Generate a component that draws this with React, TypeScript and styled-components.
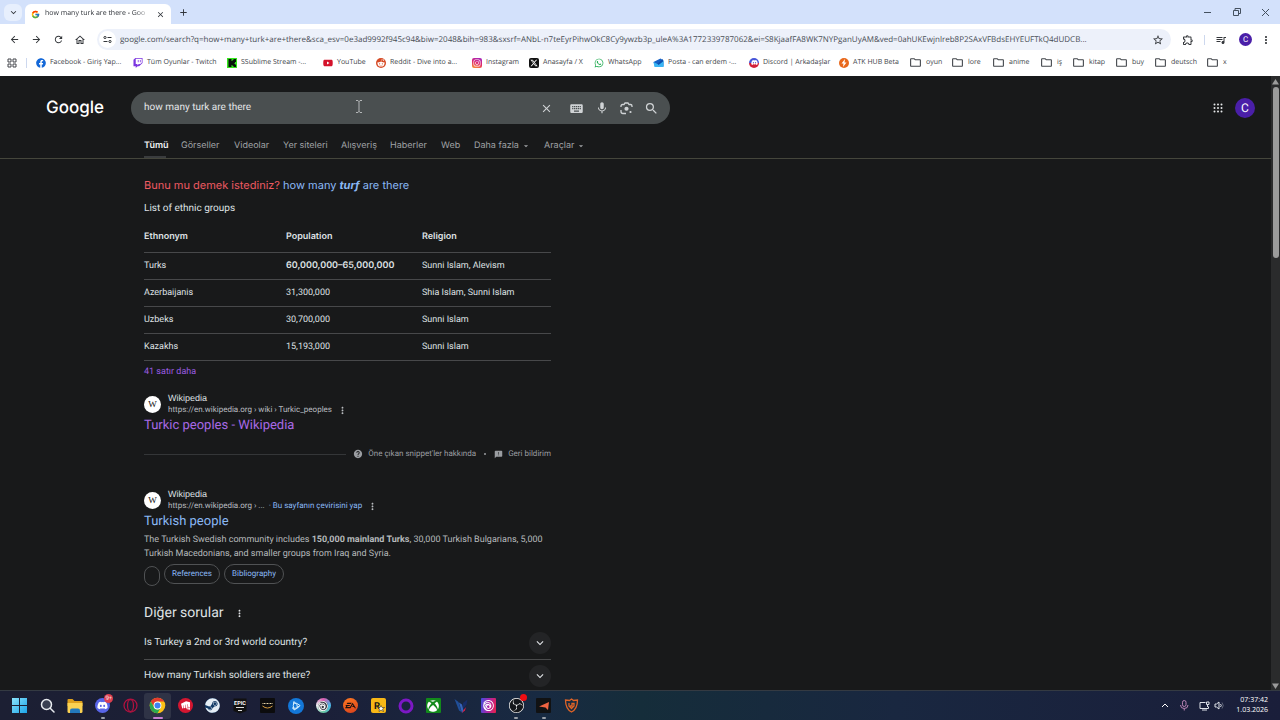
import React from 'react';
import styled, { createGlobalStyle, css } from 'styled-components';
import { FcGoogle } from 'react-icons/fc';
import {
  FaDiscord, FaFacebook, FaInstagram, FaRedditAlien, FaSteam, FaTwitch, FaWhatsapp, FaXbox, FaYoutube,
} from 'react-icons/fa';
import { FaXTwitter } from 'react-icons/fa6';
import { SiEa, SiUbisoft, SiRiotgames, SiObsstudio } from 'react-icons/si';
import {
  MdAdd, MdArrowBack, MdArrowDropDown, MdArrowForward, MdClose, MdExpandMore, MdFeedback, MdHelp,
  MdKeyboard, MdMic, MdMoreVert, MdOutlineExtension, MdOutlineFolder, MdOutlineHome, MdQueueMusic, MdRefresh,
  MdSearch, MdStarBorder,
} from 'react-icons/md';

const ui = '"Open Sans", "Noto Sans", sans-serif';
const google = 'Roboto, "Liberation Sans", sans-serif';
const strong = 'Inter, Roboto, sans-serif';
const arial = '"Liberation Sans", Arial, sans-serif';

const GlobalStyle = createGlobalStyle`
  *, *::before, *::after { box-sizing: border-box; }
  body { margin: 0; background: #18191a; text-rendering: geometricPrecision; }
  button { border: 0; padding: 0; background: none; color: inherit; font: inherit; cursor: pointer; }
  input, button { text-rendering: inherit; }
  a { color: inherit; text-decoration: none; }
  svg { display: block; flex: none; }
  h1, h2, h3, p { margin: 0; font-weight: 400; }
`;

const Screen = styled.div`
  display: flex;
  flex-direction: column;
  height: 100vh;
  overflow: hidden;
  font-family: ${google};
`;

/* Browser chrome */
const TabStrip = styled.div`
  display: flex;
  align-items: flex-end;
  height: 24px;
  flex: none;
  padding-left: 4px;
  background: #d3e1fb;
  color: #30343a;
  font-family: ${ui};
`;
const TabSearch = styled.button`
  display: grid;
  place-items: center;
  width: 18px;
  height: 17px;
  margin: 0 3px 3px 0;
  border-radius: 6px;
  background: #e7effd;
`;
const Tab = styled.div`
  display: flex;
  align-items: center;
  gap: 5px;
  width: 146px;
  height: 20px;
  padding: 0 6px;
  border-radius: 6px 6px 0 0;
  background: #fff;
`;
const TabTitle = styled.span`
  flex: 1;
  overflow: hidden;
  white-space: nowrap;
  font-size: 7px;
  line-height: 12px;
  mask-image: linear-gradient(90deg, #000 85%, transparent);
`;
const NewTab = styled.button`
  display: grid;
  place-items: center;
  width: 24px;
  height: 24px;
`;
const WindowButtons = styled.div`
  display: flex;
  margin-left: auto;
`;
const WindowButton = styled.button`
  display: grid;
  place-items: center;
  width: 29px;
  height: 24px;
`;
const Toolbar = styled.div`
  display: flex;
  align-items: center;
  height: 30px;
  flex: none;
  padding: 1px 0 0 3px;
  background: #fff;
  color: #34373b;
`;
const ToolButton = styled.button<{ $w?: number }>`
  display: grid;
  place-items: center;
  width: ${(p) => p.$w ?? 22}px;
  height: 22px;
  flex: none;
`;
const Omnibox = styled.div`
  display: flex;
  align-items: center;
  flex: 1;
  min-width: 0;
  height: 21px;
  margin: 0 6px;
  padding-left: 2px;
  border-radius: 11px;
  background: #edf1fa;
`;
const SiteInfo = styled.button`
  display: grid;
  place-items: center;
  width: 17px;
  height: 17px;
  flex: none;
  border-radius: 50%;
  background: #fff;
`;
const UrlInput = styled.input`
  flex: 1;
  min-width: 0;
  margin-left: 4px;
  border: 0;
  padding: 0;
  background: none;
  color: #484d55;
  font: 8px/16px ${ui};
  text-overflow: ellipsis;
  outline: 0;
`;
const Divider = styled.span<{ $gap?: number }>`
  width: 1px;
  height: 10px;
  flex: none;
  margin: 0 ${(p) => p.$gap ?? 5}px;
  background: #cdd8ee;
`;
const Avatar = styled.button<{ $size: number }>`
  display: grid;
  place-items: center;
  width: ${(p) => p.$size}px;
  height: ${(p) => p.$size}px;
  flex: none;
  border-radius: 50%;
  background: #4a1fa8;
  color: #fff;
  font: ${(p) => (p.$size > 15 ? 12 : 8)}px/12px ${google};
`;
const Profile = styled.div`
  margin-left: 7px;
`;
const Bookmarks = styled.nav`
  display: flex;
  align-items: center;
  height: 22px;
  flex: none;
  padding: 0 0 5px 7px;
  background: #fff;
  color: #404449;
  font: 7px/12px ${ui};
  white-space: nowrap;
`;
const Bookmark = styled.a<{ $w: number }>`
  display: flex;
  align-items: center;
  gap: 4px;
  width: ${(p) => p.$w}px;
  flex: none;
`;
const Square = styled.span<{ $bg: string; $round?: boolean }>`
  display: grid;
  place-items: center;
  width: 10px;
  height: 10px;
  flex: none;
  border-radius: ${(p) => (p.$round ? '50%' : '2px')};
  background: ${(p) => p.$bg};
  color: #fff;
`;

/* Search page */
const Viewport = styled.div`
  display: flex;
  flex: 1;
  min-height: 0;
  background: #18191a;
  color: #dfe1e4;
`;
const Page = styled.main`
  flex: 1;
  min-width: 0;
  overflow: hidden;
`;
const Header = styled.header`
  border-bottom: 1px solid #45463c;
`;
const SearchRow = styled.div`
  display: flex;
  align-items: center;
  padding: 16px 16px 0 46px;
`;
const Logo = styled.a`
  width: 85px;
  color: #fff;
  font: 500 17px/24px Inter, sans-serif;
`;
const SearchBox = styled.form`
  position: relative;
  display: flex;
  align-items: center;
  width: 539px;
  height: 32px;
  padding: 0 6px 0 13px;
  border-radius: 16px;
  background: #4a4f50;
  color: #d0d3d5;
`;
const SearchInput = styled.input`
  flex: 1;
  min-width: 0;
  border: 0;
  padding: 0;
  background: none;
  color: #e4e6e8;
  font: 10px/20px ${google};
  outline: 0;
`;
const SearchButton = styled.button<{ $w?: number }>`
  display: grid;
  place-items: center;
  width: ${(p) => p.$w ?? 25}px;
  height: 24px;
`;
const Pointer = styled.svg`
  position: absolute;
  left: 224px;
  top: 8px;
`;
const Account = styled.div`
  display: flex;
  align-items: center;
  gap: 12px;
  margin-left: auto;
`;
const Filters = styled.nav`
  display: flex;
  gap: 15px;
  padding: 9px 0 0 144px;
  color: #a0a3a6;
  font: 9px/25px ${strong};
  white-space: nowrap;
`;
const Filter = styled.a<{ $active?: boolean; $w: number }>`
  display: flex;
  align-items: center;
  gap: 2px;
  width: ${(p) => p.$w}px;
  ${(p) => p.$active && css`
    color: #f1f2f3;
    font-weight: 600;
    box-shadow: inset 0 -2px #3a3c3e;
  `}
`;
const Results = styled.div`
  width: 407px;
  margin-left: 144px;
  padding-top: 14px;
`;
const DidYouMean = styled.p`
  color: #ee5a62;
  font: 11px/24px ${strong};
  a { color: #8ab8f5; }
  em { font-weight: 700; }
`;
const ListTitle = styled.h2`
  font-size: 10px;
  line-height: 24px;
`;
const Table = styled.table`
  width: 100%;
  border-spacing: 0;
  table-layout: fixed;
  font-size: 9px;
  line-height: 16px;
  th, td {
    height: 27px;
    padding: 0;
    border-bottom: 1px solid #47484a;
    text-align: left;
    font-weight: 400;
  }
  thead th, b { font-family: ${strong}; font-weight: 600; }
  thead th { height: 32px; }
  thead th:nth-child(1) { width: 142px; }
  thead th:nth-child(2) { width: 136px; }
`;
const MoreRows = styled.a`
  display: block;
  color: #9a5be0;
  font-size: 9px;
  line-height: 23px;
`;
const Source = styled.div`
  display: flex;
  align-items: center;
  gap: 7px;
  height: 24px;
  margin-top: 8px;
`;
const Favicon = styled.span`
  display: grid;
  place-items: center;
  width: 17px;
  height: 17px;
  border-radius: 50%;
  background: #fff;
  color: #222;
  font: 9px/12px "Liberation Serif", serif;
`;
const SiteName = styled.div`
  font: 9px/12px ${arial};
`;
const SitePath = styled.div`
  display: flex;
  align-items: center;
  color: #b9bcc0;
  font-size: 8px;
  line-height: 12px;
  white-space: pre;
  a { color: #8ab8f5; }
  button { margin-left: 5px; }
`;
const ResultTitle = styled.h3<{ $visited?: boolean }>`
  color: ${(p) => (p.$visited ? '#a869e6' : '#8ab8f5')};
  font-size: 13px;
  line-height: 20px;
`;
const SnippetFooter = styled.div`
  display: flex;
  align-items: center;
  margin: 9px 0 25px;
  color: #9a9da1;
  font-size: 8px;
  line-height: 18px;
`;
const Rule = styled.span`
  flex: 1;
  height: 1px;
  margin-right: 7px;
  background: #343638;
`;
const FooterLink = styled.a`
  display: flex;
  align-items: center;
  gap: 5px;
`;
const Dot = styled.span`
  width: 2px;
  height: 2px;
  margin: 0 8px;
  border-radius: 50%;
  background: #9a9da1;
`;
const Description = styled.p`
  padding-top: 1px;
  color: #b6b9bc;
  font-size: 9px;
  line-height: 14px;
`;
const Chips = styled.div`
  display: flex;
  align-items: flex-start;
  gap: 4px;
  padding-top: 3px;
`;
const Chip = styled.a<{ $empty?: boolean }>`
  display: block;
  min-width: 16px;
  height: 20px;
  margin-top: ${(p) => (p.$empty ? 2 : 0)}px;
  padding: 0 7px;
  border: 1px solid #505254;
  border-radius: 10px;
  color: #8ab8f5;
  font-size: 8px;
  line-height: 18px;
`;
const QuestionsHead = styled.div`
  display: flex;
  align-items: center;
  gap: 10px;
  margin: 17px 0 4px;
`;
const QuestionsTitle = styled.h2`
  font-size: 14px;
  line-height: 20px;
`;
const Question = styled.button`
  display: flex;
  align-items: center;
  justify-content: space-between;
  width: 100%;
  height: 33px;
  border-bottom: 1px solid #4a4b4c;
  font-size: 10px;
  line-height: 20px;
`;
const Round = styled.span`
  display: grid;
  place-items: center;
  width: 22px;
  height: 22px;
  border-radius: 50%;
  background: #232426;
`;
const Scrollbar = styled.div`
  display: flex;
  flex-direction: column;
  align-items: center;
  justify-content: space-between;
  width: 9px;
  padding: 3px 0 1px;
  background: #2a2b2c;
`;
const Thumb = styled.div`
  width: 6px;
  height: 171px;
  margin: 2px 0 auto;
  border-radius: 3px;
  background: #9b9b9b;
`;

/* Taskbar */
const Taskbar = styled.footer`
  display: flex;
  align-items: center;
  justify-content: space-between;
  height: 30px;
  flex: none;
  padding: 0 12px 0 6px;
  border-top: 1px solid #343a42;
  background: linear-gradient(90deg, #1c1f33 0%, #1b1f38 25%, #182a42 42%, #152d3a 50%, #192740 70%, #1a1e3a 100%);
  color: #fff;
  font-family: ${ui};
`;
const Apps = styled.div`
  display: flex;
  width: 579px;
`;
const AppButton = styled.button<{ $running?: string; $active?: boolean }>`
  position: relative;
  display: grid;
  place-items: center;
  flex: 1;
  height: 26px;
  border-radius: 3px;
  background: ${(p) => (p.$active ? '#2f3346' : 'none')};
  ${(p) => p.$running && css`
    &::after {
      content: '';
      position: absolute;
      bottom: 0;
      width: ${p.$active ? 10 : 4}px;
      height: 2px;
      border-radius: 1px;
      background: ${p.$running};
    }
  `}
`;
const Badge = styled.span`
  position: absolute;
  top: 1px;
  right: 3px;
  width: 9px;
  height: 9px;
  border-radius: 50%;
  background: #dc3f50;
  color: #fff;
  font-size: 6px;
  line-height: 9px;
`;
const RecDot = styled(Badge)`
  width: 7px;
  height: 7px;
  background: #f00d12;
`;
const Tile = styled.span<{ $bg: string; $round?: boolean; $color?: string }>`
  display: grid;
  place-items: center;
  width: 15px;
  height: 15px;
  border-radius: ${(p) => (p.$round ? '50%' : '1px')};
  background: ${(p) => p.$bg};
  color: ${(p) => p.$color ?? '#fff'};
`;
const Tray = styled.div`
  display: flex;
  align-items: center;
  gap: 7px;
`;
const Status = styled.div`
  display: flex;
  align-items: center;
  gap: 4px;
`;
const Clock = styled.time`
  width: 37px;
  font-size: 7px;
  line-height: 10px;
  text-align: right;
  white-space: nowrap;
`;

const Kick = () => (
  <svg width="10" height="10" viewBox="0 0 20 20">
    <path fill="#35e51c" d="M0 0h20v20H0z" />
    <path fill="#07130a" d="M3 2h6v4h2V4h2V2h5v6h-2v2h-2v1h2v2h2v5h-5v-2h-2v-2H9v4H3z" />
  </svg>
);
const Mail = () => (
  <svg width="11" height="10" viewBox="0 0 22 20">
    <path fill="#1560c5" d="M1 8 15 1l6 4v12H4z" />
    <path fill="#39b5f4" d="M1 8l10 5L21 5v13H3z" />
    <path fill="#0d4fae" d="M9 11 20 2v5l-9 7z" />
  </svg>
);
const SiteControls = () => (
  <svg width="9" height="9" viewBox="0 0 18 18" fill="none" stroke="#34373b" strokeWidth="2">
    <circle cx="4" cy="5" r="2.2" /><path d="M9 5h8M1 13h8" /><circle cx="14" cy="13" r="2.2" />
  </svg>
);
const TabGroups = () => (
  <svg width="10" height="10" viewBox="0 0 20 20" fill="none" stroke="#44474c" strokeWidth="2">
    <path d="M2 2h6v6H2zM12 2h6v6h-6zM2 12h6v6H2zM12 12h6v6h-6z" />
  </svg>
);
const Lens = () => (
  <svg width="13" height="13" viewBox="0 0 26 26" fill="none" stroke="currentColor" strokeWidth="2.6">
    <path d="M2 10V8q0-3 3-3h3l2-3h6l2 3h3q3 0 3 3v2M2 16v3q0 4 4 4h6" />
    <circle cx="13" cy="13.5" r="4.2" fill="currentColor" stroke="none" />
    <circle cx="21" cy="20" r="2.2" fill="currentColor" stroke="none" />
  </svg>
);
const AppsGrid = () => (
  <svg width="10" height="10" viewBox="0 0 20 20" fill="#e6e8ea">
    {[3, 10, 17].map((y) => [3, 10, 17].map((x) => <circle key={`${x}-${y}`} cx={x} cy={y} r="2" />))}
  </svg>
);
const Chrome = () => (
  <svg width="17" height="17" viewBox="0 0 48 48">
    <circle cx="24" cy="24" r="22" fill="#fbc116" />
    <path fill="#e33b2e" d="M5 13a22 22 0 0 1 38 0H24a11 11 0 0 0-9.500 16.500z" />
    <path fill="#2da94f" d="M5 13a22 22 0 0 0 19 33l9.500-16.500A11 11 0 0 1 14.500 29.500z" />
    <circle cx="24" cy="24" r="11" fill="#fff" /><circle cx="24" cy="24" r="8.500" fill="#3e82f1" />
  </svg>
);
const StartLogo = () => (
  <svg width="15" height="15" viewBox="0 0 30 30">
    <defs>
      <linearGradient id="start" x1="0" y1="0" x2="1" y2="1">
        <stop stopColor="#8be3fb" /><stop offset="1" stopColor="#1ba4e8" />
      </linearGradient>
    </defs>
    <path fill="url(#start)" d="M0 0h14v14H0zM16 0h14v14H16zM0 16h14v14H0zM16 16h14v14H16z" />
  </svg>
);
const TaskSearch = () => (
  <svg width="15" height="15" viewBox="0 0 30 30" fill="#3a4052" stroke="#e8ebef" strokeWidth="3">
    <circle cx="13" cy="13" r="10" /><path strokeLinecap="round" d="m21 21 7 7" />
  </svg>
);
const Explorer = () => (
  <svg width="16" height="14" viewBox="0 0 32 28">
    <path fill="#dfa11d" d="M1 2q0-2 2-2h8l4 4h14q2 0 2 2v8H1z" />
    <path fill="#fbd252" d="M1 8h30v17q0 3-3 3H4q-3 0-3-3z" />
    <path fill="#2379bd" d="M6 28v-5q0-4 4-4h12q4 0 4 4v5z" />
  </svg>
);
const BattleNet = () => (
  <svg width="16" height="16" viewBox="0 0 32 32">
    <circle cx="16" cy="16" r="16" fill="#1377d8" />
    <g fill="none" stroke="#d9f2ff" strokeWidth="2">
      <path d="M12 7q-3 8 0 17 9-4 12-9-6-6-14-5" /><path d="M8 20q8 3 15-4M12 7q8 6 7 13" />
    </g>
  </svg>
);
const RiotVanguard = () => (
  <svg width="14" height="16" viewBox="0 0 28 32">
    <path fill="#204f99" d="M1 2 9 8l6 20-5-3z" />
    <path fill="#3563ba" d="M10 9l6 4 3 12-3 5z" />
    <path fill="#172c67" d="M27 3 18 10v12l7-9z" />
    <path fill="#d21e43" d="m16 30 6-5 2-7-5 6z" />
  </svg>
);
const Shield = () => (
  <svg width="15" height="15" viewBox="0 0 30 30" fill="none" stroke="#e06427" strokeWidth="2.600">
    <path d="m15 2 4 3 8-1q0 18-12 24Q3 22 3 4l8 1z" /><path d="M10 10v6l5 5 5-5v-5h-4v5h-4" />
  </svg>
);
const Arrow = () => (
  <svg width="10" height="8" viewBox="0 0 20 16"><path fill="#ef6442" d="M20 0 18 16l-5-5-13-2z" /></svg>
);
const Network = () => (
  <svg width="11" height="10" viewBox="0 0 22 20" fill="none" stroke="#dfe3ea" strokeWidth="2">
    <path d="M13 3H2v12h17v-4M6 18h10" /><path d="M15 2h5v5h-5zM17 7v5" />
  </svg>
);
const Speaker = () => (
  <svg width="10" height="9" viewBox="0 0 20 18" fill="none" stroke="#dfe3ea" strokeWidth="2">
    <path d="M2 6v6h3l5 4V2L5 6zM13 6q3 3 0 6" /><path stroke="#606678" d="M16 3q5 6 0 12" />
  </svg>
);
const Triangle = ({ down }: { down?: boolean }) => (
  <svg width="7" height="6" viewBox="0 0 14 12"><path fill="#9b9b9b" d={down ? 'M0 1h14L7 12z' : 'M0 11h14L7 0z'} /></svg>
);

const folder = <MdOutlineFolder size={13} />;
const bookmarks: { label: string; width: number; icon: React.ReactNode }[] = [
  { label: 'Facebook - Giriş Yap...', width: 97, icon: <FaFacebook size={10} color="#1468d8" /> },
  { label: 'Tüm Oyunlar - Twitch', width: 94, icon: <FaTwitch size={10} color="#7c35e0" /> },
  { label: 'SSublime Stream -...', width: 96, icon: <Kick /> },
  { label: 'YouTube', width: 53, icon: <FaYoutube size={10} color="#d4122b" /> },
  { label: 'Reddit - Dive into a...', width: 96, icon: <Square $bg="#d64a25" $round><FaRedditAlien size={8} /></Square> },
  { label: 'Instagram', width: 57, icon: <Square $bg="linear-gradient(20deg,#fb9b2e,#e0266c 50%,#9a28c8)"><FaInstagram size={8} /></Square> },
  { label: 'Anasayfa / X', width: 65, icon: <Square $bg="#111"><FaXTwitter size={8} /></Square> },
  { label: 'WhatsApp', width: 59, icon: <FaWhatsapp size={10} color="#27ad56" /> },
  { label: 'Posta - can erdem -...', width: 96, icon: <Mail /> },
  { label: 'Discord | Arkadaşlar', width: 90, icon: <Square $bg="linear-gradient(#4655d8 45%,#d3203a 45%)" $round><FaDiscord size={7} /></Square> },
  { label: 'ATK HUB Beta', width: 70, icon: (
    <Square $bg="#e8681c" $round><svg width="6" height="8" viewBox="0 0 12 16"><path fill="#fff" d="M8 0 1 9h4l-1 7 7-9H7z" /></svg></Square>
  ) },
  { label: 'oyun', width: 42, icon: folder },
  { label: 'lore', width: 41, icon: folder },
  { label: 'anime', width: 48, icon: folder },
  { label: 'iş', width: 32, icon: folder },
  { label: 'kitap', width: 43, icon: folder },
  { label: 'buy', width: 39, icon: folder },
  { label: 'deutsch', width: 52, icon: folder },
  { label: 'x', width: 30, icon: folder },
];

const filters: { label: string; width: number; menu?: boolean }[] = [
  { label: 'Tümü', width: 22 },
  { label: 'Görseller', width: 38 },
  { label: 'Videolar', width: 34 },
  { label: 'Yer siteleri', width: 43 },
  { label: 'Alışveriş', width: 34 },
  { label: 'Haberler', width: 36 },
  { label: 'Web', width: 18 },
  { label: 'Daha fazla', width: 55, menu: true },
  { label: 'Araçlar', width: 40, menu: true },
];

const rows = [
  ['Turks', '60,000,000–65,000,000', 'Sunni Islam, Alevism'],
  ['Azerbaijanis', '31,300,000', 'Shia Islam, Sunni Islam'],
  ['Uzbeks', '30,700,000', 'Sunni Islam'],
  ['Kazakhs', '15,193,000', 'Sunni Islam'],
];

const apps: { name: string; icon: React.ReactNode; running?: string; active?: boolean }[] = [
  { name: 'Start', icon: <StartLogo /> },
  { name: 'Search', icon: <TaskSearch /> },
  { name: 'File Explorer', icon: <Explorer /> },
  { name: 'Discord', running: '#9aa0a8', icon: <><Tile $bg="#5865e8" $round><FaDiscord size={11} /></Tile><Badge>9+</Badge></> },
  { name: 'Opera GX', icon: (
    <svg width="15" height="15" viewBox="0 0 30 30" fill="none" stroke="#b3123f" strokeWidth="2.500"><circle cx="15" cy="15" r="13" /><ellipse cx="15" cy="15" rx="6" ry="12" /></svg>
  ) },
  { name: 'Chrome', running: '#c77fd0', active: true, icon: <Chrome /> },
  { name: 'Riot Client', icon: <Tile $bg="#d41630" $round><SiRiotgames size={9} /></Tile> },
  { name: 'Steam', icon: <Tile $bg="#123a66" $round $color="#e6eef5"><FaSteam size={15} /></Tile> },
  { name: 'Epic Games', icon: (
    <svg width="14" height="16" viewBox="0 0 28 32"><path fill="#111" d="M1 1h26v25l-13 5-13-5z" /><text x="14" y="14" fill="#fff" fontFamily="Roboto" fontWeight="700" fontSize="11" textAnchor="middle">EPIC</text><path stroke="#ddd" strokeWidth="2" d="M6 19h16M10 25h8" /></svg>
  ) },
  { name: 'Amazon Games', icon: (
    <Tile $bg="#0c0c0d"><svg width="13" height="9" viewBox="0 0 26 18"><path fill="none" stroke="#d59b3d" strokeWidth="2" d="M3 10q10 8 20 0" /><path fill="none" stroke="#e5d3a8" strokeWidth="2" strokeDasharray="2 1" d="M3 5h20" /></svg></Tile>
  ) },
  { name: 'Battle.net', icon: <BattleNet /> },
  { name: 'Ubisoft Connect', icon: <Tile $bg="conic-gradient(#d95bb0,#46b7e8,#69c7a2,#e9edf0,#d95bb0)" $round><Square $bg="#30343e" $round><SiUbisoft size={10} /></Square></Tile> },
  { name: 'EA', icon: <Tile $bg="linear-gradient(160deg,#ff7a22,#d8401c)" $round $color="#1c1210"><SiEa size={11} /></Tile> },
  { name: 'Rockstar Games', icon: (
    <svg width="15" height="15" viewBox="0 0 30 30"><rect width="30" height="30" rx="4" fill="#f8b716" /><text x="6" y="21" fill="#151515" fontFamily="Roboto" fontWeight="700" fontSize="19">R</text><path fill="#fff" stroke="#151515" d="m20 15 2 4 5 0-4 3 2 5-5-3-4 3 1-5-3-3h4z" /></svg>
  ) },
  { name: 'Ring', icon: (
    <svg width="16" height="16" viewBox="0 0 32 32"><circle cx="16" cy="16" r="12" fill="none" stroke="#7c18c4" strokeWidth="6" /></svg>
  ) },
  { name: 'Xbox', icon: <Tile $bg="#128a1b"><FaXbox size={12} /></Tile> },
  { name: 'Vanguard', icon: <RiotVanguard /> },
  { name: 'Creative Studio', icon: <Tile $bg="linear-gradient(100deg,#3f4ee0,#a926a8 50%,#e92045)"><SiUbisoft size={11} /></Tile> },
  { name: 'OBS Studio', running: '#9aa0a8', icon: <><Tile $bg="#14161a" $round><SiObsstudio size={15} /></Tile><RecDot /></> },
  { name: 'Recorder', running: '#9aa0a8', icon: <Tile $bg="#111213"><Arrow /></Tile> },
  { name: 'Shield', icon: <Shield /> },
];

const url = 'google.com/search?q=how+many+turk+are+there&sca_esv=0e3ad9992f945c94&biw=2048&bih=983&sxsrf=ANbL-n7teEyrPihwOkC8Cy9ywzb3p_uleA%3A1772339787062&ei=S8KjaafFA8WK7NYPganUyAM&ved=0ahUKEwjnlreb8P2SAxVFBdsEHYEUFTkQ4dUDCB...';

export default function App() {
  return (
    <Screen>
      <GlobalStyle />
      <TabStrip>
        <TabSearch aria-label="Search tabs"><MdExpandMore size={11} /></TabSearch>
        <Tab>
          <FcGoogle size={9} />
          <TabTitle>how many turk are there - Goo</TabTitle>
          <button aria-label="Close tab"><MdClose size={9} /></button>
        </Tab>
        <NewTab aria-label="New tab"><MdAdd size={11} /></NewTab>
        <WindowButtons>
          <WindowButton aria-label="Minimize"><svg width="7" height="7" viewBox="0 0 7 7"><path stroke="#44505f" d="M0 3.500h7" /></svg></WindowButton>
          <WindowButton aria-label="Restore"><svg width="8" height="8" viewBox="0 0 16 16" fill="none" stroke="#44505f" strokeWidth="2"><path d="M1 5h10v10H1zM4 4V1h11v10h-3" /></svg></WindowButton>
          <WindowButton aria-label="Close"><svg width="7" height="7" viewBox="0 0 7 7"><path stroke="#44505f" d="M0 0l7 7M7 0 0 7" /></svg></WindowButton>
        </WindowButtons>
      </TabStrip>
      <Toolbar>
        <ToolButton aria-label="Back"><MdArrowBack size={11} /></ToolButton>
        <ToolButton aria-label="Forward"><MdArrowForward size={11} /></ToolButton>
        <ToolButton aria-label="Reload"><MdRefresh size={11} /></ToolButton>
        <ToolButton aria-label="Home"><MdOutlineHome size={12} /></ToolButton>
        <Omnibox>
          <SiteInfo aria-label="Site information"><SiteControls /></SiteInfo>
          <UrlInput aria-label="Address" defaultValue={url} />
          <ToolButton $w={26} aria-label="Bookmark this page"><MdStarBorder size={12} /></ToolButton>
        </Omnibox>
        <ToolButton aria-label="Extensions"><MdOutlineExtension size={12} /></ToolButton>
        <Divider />
        <ToolButton aria-label="Media controls"><MdQueueMusic size={12} /></ToolButton>
        <Profile><Avatar $size={13} aria-label="Profile">C</Avatar></Profile>
        <ToolButton $w={28} aria-label="Menu"><MdMoreVert size={12} /></ToolButton>
      </Toolbar>
      <Bookmarks>
        <TabGroups />
        <Divider $gap={9} />
        {bookmarks.map((b) => (
          <Bookmark key={b.label} href="#" $w={b.width}>{b.icon}{b.label}</Bookmark>
        ))}
      </Bookmarks>

      <Viewport>
        <Page>
          <Header>
            <SearchRow>
              <Logo href="#">Google</Logo>
              <SearchBox onSubmit={(e) => e.preventDefault()}>
                <SearchInput aria-label="Search" defaultValue="how many turk are there" />
                <SearchButton type="button" $w={36} aria-label="Clear"><MdClose size={13} /></SearchButton>
                <SearchButton type="button" aria-label="Keyboard"><MdKeyboard size={15} /></SearchButton>
                <SearchButton type="button" aria-label="Voice search"><MdMic size={14} /></SearchButton>
                <SearchButton type="button" aria-label="Search by image"><Lens /></SearchButton>
                <SearchButton aria-label="Search"><MdSearch size={15} /></SearchButton>
                <Pointer width="8" height="13" viewBox="0 0 8 13" fill="none" stroke="#b4b7b8"><path d="M1 .5h2l1 1 1-1h2M1 12.500h2l1-1 1 1h2M4 1v11" /></Pointer>
              </SearchBox>
              <Account>
                <button aria-label="Google apps"><AppsGrid /></button>
                <Avatar $size={20} aria-label="Account">C</Avatar>
              </Account>
            </SearchRow>
            <Filters>
              {filters.map((f, i) => (
                <Filter key={f.label} href="#" $active={i === 0} $w={f.width}>
                  {f.label}{f.menu && <MdArrowDropDown size={10} />}
                </Filter>
              ))}
            </Filters>
          </Header>
          <Results>
            <DidYouMean>Bunu mu demek istediniz? <a href="#">how many <em>turf</em> are there</a></DidYouMean>
            <ListTitle>List of ethnic groups</ListTitle>
            <Table>
              <thead><tr><th>Ethnonym</th><th>Population</th><th>Religion</th></tr></thead>
              <tbody>
                {rows.map(([name, population, religion], i) => (
                  <tr key={name}><td>{name}</td><td>{i === 0 ? <b>{population}</b> : population}</td><td>{religion}</td></tr>
                ))}
              </tbody>
            </Table>
            <MoreRows href="#">41 satır daha</MoreRows>
            <Source>
              <Favicon>W</Favicon>
              <div>
                <SiteName>Wikipedia</SiteName>
                <SitePath>https://en.wikipedia.org › wiki › Turkic_peoples<button aria-label="About this result"><MdMoreVert size={11} /></button></SitePath>
              </div>
            </Source>
            <ResultTitle $visited><a href="#">Turkic peoples - Wikipedia</a></ResultTitle>
            <SnippetFooter>
              <Rule />
              <FooterLink href="#"><MdHelp size={10} />Öne çıkan snippet'ler hakkında</FooterLink>
              <Dot />
              <FooterLink href="#"><MdFeedback size={9} />Geri bildirim</FooterLink>
            </SnippetFooter>
            <Source>
              <Favicon>W</Favicon>
              <div>
                <SiteName>Wikipedia</SiteName>
                <SitePath>{'https://en.wikipedia.org › ...  · '}<a href="#">Bu sayfanın çevirisini yap</a><button aria-label="About this result"><MdMoreVert size={11} /></button></SitePath>
              </div>
            </Source>
            <ResultTitle><a href="#">Turkish people</a></ResultTitle>
            <Description>
              The Turkish Swedish community includes <b>150,000 mainland Turks</b>, 30,000 Turkish Bulgarians, 5,000 Turkish Macedonians, and smaller groups from Iraq and Syria.
            </Description>
            <Chips>
              <Chip href="#" $empty aria-label="More" />
              <Chip href="#">References</Chip>
              <Chip href="#">Bibliography</Chip>
            </Chips>
            <QuestionsHead>
              <QuestionsTitle>Diğer sorular</QuestionsTitle>
              <button aria-label="About these questions"><MdMoreVert size={11} /></button>
            </QuestionsHead>
            <Question>Is Turkey a 2nd or 3rd world country?<Round><MdExpandMore size={14} /></Round></Question>
            <Question>How many Turkish soldiers are there?<Round><MdExpandMore size={14} /></Round></Question>
          </Results>
        </Page>
        <Scrollbar><Triangle /><Thumb /><Triangle down /></Scrollbar>
      </Viewport>

      <Taskbar>
        <Apps>
          {apps.map((a) => (
            <AppButton key={a.name} aria-label={a.name} $running={a.running} $active={a.active}>{a.icon}</AppButton>
          ))}
        </Apps>
        <Tray>
          <svg width="8" height="5" viewBox="0 0 16 10"><path fill="none" stroke="#fff" strokeWidth="2" d="m2 8 6-6 6 6" /></svg>
          <svg width="16" height="11" viewBox="0 0 32 22" fill="none" stroke="#b983b4" strokeWidth="2"><rect x="13" y="1" width="7" height="12" rx="3.500" /><path d="M9 10q0 7 7.500 7T24 10M16.500 17v4" /></svg>
          <Status><Network /><Speaker /></Status>
          <Clock>07:37:42<br />1.03.2026</Clock>
        </Tray>
      </Taskbar>
    </Screen>
  );
}
